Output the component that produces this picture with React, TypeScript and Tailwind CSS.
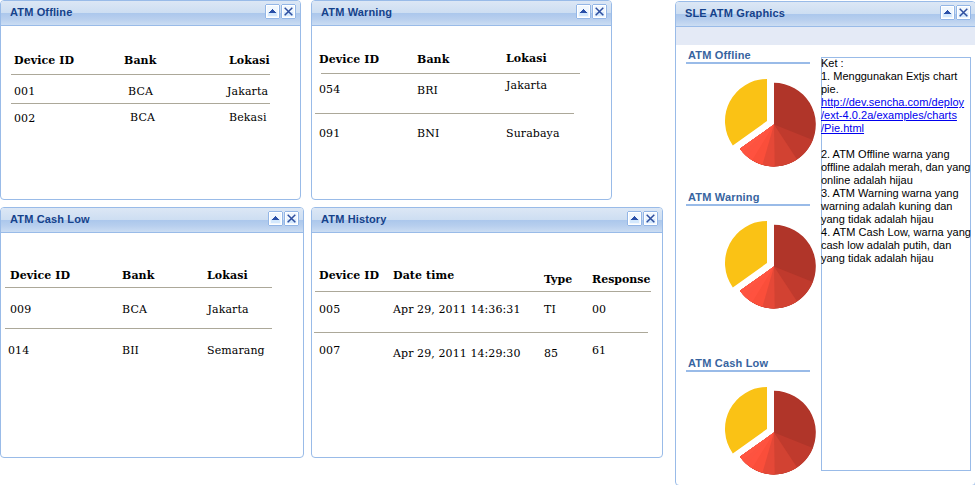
import type { ReactNode } from "react";

function ToolButton({ kind }: { kind: "collapse" | "close" }) {
  return (
    <button className="flex h-[15px] w-[15px] items-center justify-center" aria-label={kind}>
      <svg width="15" height="15" viewBox="0 0 15 15" shapeRendering="crispEdges">
        <rect x="1" y="0" width="13" height="15" fill="#93b6e6" />
        <rect x="0" y="1" width="15" height="13" fill="#93b6e6" />
        <rect x="1" y="1" width="13" height="13" fill="#ffffff" />
        <rect x="2" y="2" width="11" height="11" fill="#f0f7fe" />
        <rect x="3" y="8" width="9" height="4" fill="#d3e8fd" />
        {kind === "collapse" ? (
          <path d="M7 5h1v1h1v1h1v1h1v1H4V8h1V7h1V6h1z" fill="#2a50a8" />
        ) : (
          <path
            d="M3.7 3.7l7.6 7.6M11.3 3.7l-7.6 7.6"
            stroke="#2f4f9f"
            strokeWidth="1.5"
            fill="none"
            shapeRendering="auto"
          />
        )}
      </svg>
    </button>
  );
}

function Panel({ title, className, children }: { title: string; className: string; children: ReactNode }) {
  return (
    <section className={`flex shrink-0 flex-col overflow-hidden rounded-[4px] border border-[#99bbe8] bg-white ${className}`}>
      <header className="flex h-[25px] shrink-0 items-start justify-between border-b border-[#99bbe8] bg-[linear-gradient(#dce7f5_0px,#cddef2_12px,#abc7ec_12px,#b8cfee_18px,#cbddf3_24px)] pl-[9px] pr-[4px] pt-[3px]">
        <h2 className="pt-[2px] text-[11px] font-bold leading-[13px] tracking-[0.14px] text-[#15428b]">{title}</h2>
        <div className="flex gap-px">
          <ToolButton kind="collapse" />
          <ToolButton kind="close" />
        </div>
      </header>
      {children}
    </section>
  );
}

function Row({ className, children }: { className: string; children: ReactNode }) {
  return (
    <div className={`flex shrink-0 items-start whitespace-nowrap font-['DejaVu_Serif',serif] text-[11px] leading-[13px] tracking-[0.09px] text-black ${className}`}>
      {children}
    </div>
  );
}

function Rule({ className }: { className: string }) {
  return <hr className={`h-px shrink-0 border-0 bg-[#aca899] ${className}`} />;
}

const PIE_END = 234.5;

const slices = [
  { from: 0, color: "#b03529" },
  { from: 111.8, color: "#c03a2d" },
  { from: 146.5, color: "#d24232" },
  { from: 179, color: "#e54837" },
  { from: 196, color: "#fa4e3a" },
  { from: 211.6, color: "#ff523f" },
  { from: 221, color: "#fd5340" },
  { from: 228, color: "#ff5541" },
];

function wedge(cx: number, cy: number, r: number, from: number, to: number) {
  const point = (deg: number) => {
    const a = (deg * Math.PI) / 180;
    return `${(cx + r * Math.sin(a)).toFixed(2)} ${(cy - r * Math.cos(a)).toFixed(2)}`;
  };
  return `M${cx} ${cy}L${point(from)}A${r} ${r} 0 ${to - from > 180 ? 1 : 0} 1 ${point(to)}Z`;
}

// Each red slice runs on to the end of the group and the next one covers it,
// so that no light seam shows between neighbours.
function Pie() {
  return (
    <svg width="94" height="90" viewBox="0 0 94 90" className="ml-[37px] mt-[14px] shrink-0">
      {slices.map((s) => (
        <path key={s.from} d={wedge(51, 46.6, 41.8, s.from, PIE_END)} fill={s.color} />
      ))}
      <path d={wedge(44, 43, 42, PIE_END, 360)} fill="#fac215" />
    </svg>
  );
}

function ChartSection({ title, className }: { title: string; className: string }) {
  return (
    <div className={`flex shrink-0 flex-col ${className}`}>
      <h3 className="h-[15px] w-[124px] border-b-2 border-[#99bbe8] pl-[2px] text-[11px] font-bold leading-[13px] tracking-[0.18px] text-[#3764a0]">{title}</h3>
      <Pie />
    </div>
  );
}

export default function App() {
  return (
    <main className="flex h-[485px] w-[975px] overflow-hidden bg-white font-['Liberation_Sans',Arial,sans-serif]">
      <div className="flex w-[675px] shrink-0 flex-col gap-[7px]">
        <div className="flex gap-[10px]">
          <Panel title="ATM Offline" className="h-[200px] w-[301px]">
            <Row className="mt-[28px] h-[20px] pl-[13px] font-bold">
              <span className="w-[110px]">Device ID</span>
              <span className="w-[105px]">Bank</span>
              <span>Lokasi</span>
            </Row>
            <Rule className="ml-[10px] w-[259px]" />
            <Row className="h-[28px] pl-[13px] pt-[10px]">
              <span className="w-[114px]">001</span>
              <span className="w-[99px]">BCA</span>
              <span>Jakarta</span>
            </Row>
            <Rule className="ml-[10px] w-[259px]" />
            <Row className="pl-[13px] pt-[7px]">
              <span className="w-[116px] pt-px">002</span>
              <span className="w-[99px]">BCA</span>
              <span>Bekasi</span>
            </Row>
          </Panel>
          <Panel title="ATM Warning" className="h-[200px] w-[301px]">
            <Row className="mt-[26px] h-[21px] pl-[7px] font-bold">
              <span className="w-[98px] pt-px">Device ID</span>
              <span className="w-[89px] pt-px">Bank</span>
              <span>Lokasi</span>
            </Row>
            <Rule className="ml-[9px] w-[259px]" />
            <Row className="h-[39px] pl-[7px] pt-[5px]">
              <span className="w-[98px] pt-[4px]">054</span>
              <span className="w-[89px] pt-[5px]">BRI</span>
              <span>Jakarta</span>
            </Row>
            <Rule className="ml-[3px] w-[259px]" />
            <Row className="pl-[7px] pt-[13px]">
              <span className="w-[98px]">091</span>
              <span className="w-[89px]">BNI</span>
              <span>Surabaya</span>
            </Row>
          </Panel>
        </div>
        <div className="flex gap-[7px]">
          <Panel title="ATM Cash Low" className="h-[251px] w-[304px]">
            <Row className="mt-[36px] h-[18px] pl-[9px] font-bold">
              <span className="w-[112px]">Device ID</span>
              <span className="w-[85px]">Bank</span>
              <span>Lokasi</span>
            </Row>
            <Rule className="ml-[4px] w-[267px]" />
            <Row className="h-[40px] pl-[9px] pt-[15px]">
              <span className="w-[112px]">009</span>
              <span className="w-[85.5px]">BCA</span>
              <span>Jakarta</span>
            </Row>
            <Rule className="ml-[4px] w-[267px]" />
            <Row className="pl-[7px] pt-[15px]">
              <span className="w-[114px]">014</span>
              <span className="w-[85px]">BII</span>
              <span>Semarang</span>
            </Row>
          </Panel>
          <Panel title="ATM History" className="h-[251px] w-[352px]">
            <Row className="mt-[36px] h-[22px] pl-[7px] font-bold">
              <span className="w-[74px]">Device ID</span>
              <span className="w-[151px]">Date time</span>
              <span className="w-[48px] pt-[4px]">Type</span>
              <span className="pt-[4px] tracking-normal">Response</span>
            </Row>
            <Rule className="ml-[3px] w-[336px]" />
            <Row className="h-[40px] pl-[7px] pt-[11px]">
              <span className="w-[74px]">005</span>
              <span className="w-[151px]">Apr 29, 2011 14:36:31</span>
              <span className="w-[48px]">TI</span>
              <span>00</span>
            </Row>
            <Rule className="ml-[2px] w-[334px]" />
            <Row className="pl-[7px] pt-[11px]">
              <span className="w-[74px]">007</span>
              <span className="w-[151px] pt-[3px]">Apr 29, 2011 14:29:30</span>
              <span className="w-[48px] pt-[3px]">85</span>
              <span>61</span>
            </Row>
          </Panel>
        </div>
      </div>
      <Panel title="SLE ATM Graphics" className="mt-px h-[485px] w-[301px]">
        <div className="h-[18px] shrink-0 bg-[#e4eaf6]" />
        <div className="flex items-start">
          <div className="flex w-[145px] shrink-0 flex-col pl-[10px]">
            <ChartSection title="ATM Offline" className="mt-[4px] h-[142px]" />
            <ChartSection title="ATM Warning" className="h-[166px]" />
            <ChartSection title="ATM Cash Low" className="" />
          </div>
          <div className="mt-[12px] h-[414px] w-[150px] shrink-0 whitespace-nowrap border border-[#99bbe8] text-[11px] leading-[13px] text-black">
            <div className="-ml-px -mt-px">
              <p>Ket :</p>
              <p>1. Menggunakan Extjs chart<br />pie.</p>
              <a className="tracking-[0.03px] text-[#0000ee] underline">
                http://dev.sencha.com/deploy<br />/ext-4.0.2a/examples/charts<br />/Pie.html
              </a>
              <p className="mt-[13px]">
                2. ATM Offline warna yang<br />
                <span className="tracking-[-0.05px]">offline adalah merah, dan yang</span><br />
                online adalah hijau
              </p>
              <p>3. ATM Warning warna yang<br />warning adalah kuning dan<br />yang tidak adalah hijau</p>
              <p>
                <span className="tracking-[0.06px]">4. ATM Cash Low, warna yang</span><br />
                cash low adalah putih, dan<br />yang tidak adalah hijau
              </p>
            </div>
          </div>
        </div>
      </Panel>
    </main>
  );
}
